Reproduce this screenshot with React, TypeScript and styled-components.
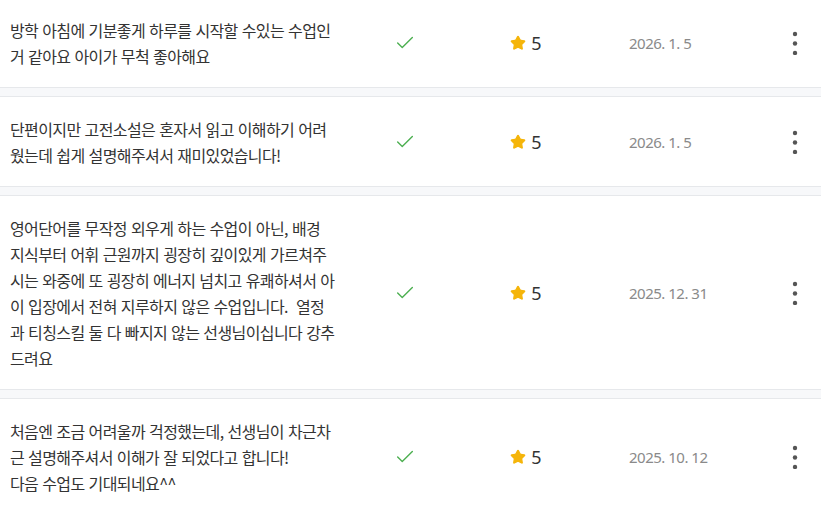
import React from "react"
import styled, { createGlobalStyle } from "styled-components"
import { Check, Star } from "lucide-react"

const GlobalStyle = createGlobalStyle`
  html, body {
    margin: 0;
    padding: 0;
    background: #f7f8fa;
  }
  body {
    font-family: "Noto Sans CJK KR", "Noto Sans", sans-serif;
  }
`

interface Review {
  id: number
  lines: string[]
  answered: boolean
  rating: number
  date: string
}

// lines kept as they wrap in the list view
const reviews: Review[] = [
  {
    id: 1,
    lines: ["방학 아침에 기분좋게 하루를 시작할 수있는 수업인", "거 같아요 아이가 무척 좋아해요"],
    answered: true,
    rating: 5,
    date: "2026. 1. 5",
  },
  {
    id: 2,
    lines: ["단편이지만 고전소설은 혼자서 읽고 이해하기 어려", "웠는데 쉽게 설명해주셔서 재미있었습니다!"],
    answered: true,
    rating: 5,
    date: "2026. 1. 5",
  },
  {
    id: 3,
    lines: [
      "영어단어를 무작정 외우게 하는 수업이 아닌, 배경",
      "지식부터 어휘 근원까지 굉장히 깊이있게 가르쳐주",
      "시는 와중에 또 굉장히 에너지 넘치고 유쾌하셔서 아",
      "이 입장에서 전혀 지루하지 않은 수업입니다.  열정",
      "과 티칭스킬 둘 다 빠지지 않는 선생님이십니다 강추",
      "드려요",
    ],
    answered: true,
    rating: 5,
    date: "2025. 12. 31",
  },
  {
    id: 4,
    lines: [
      "처음엔 조금 어려울까 걱정했는데, 선생님이 차근차",
      "근 설명해주셔서 이해가 잘 되었다고 합니다!",
      "다음 수업도 기대되네요^^",
    ],
    answered: true,
    rating: 5,
    date: "2025. 10. 12",
  },
]

const List = styled.div`
  display: flex;
  flex-direction: column;
  gap: 8px;
`

const Row = styled.div`
  display: grid;
  grid-template-columns: 340px 110px 132px 1fr 40px;
  align-items: center;
  padding: 18.5px 6px 18.5px 10px;
  background: #fff;
  border-top: 1px solid #e6e8eb;
  border-bottom: 1px solid #e6e8eb;

  &:first-child {
    border-top: none;
    padding-top: 16.5px;
  }
`

const ReviewText = styled.p`
  margin: 0;
  font-size: 16px;
  line-height: 26px;
  letter-spacing: -0.6px;
  word-spacing: 1px;
  color: #333;
  white-space: pre-wrap;
`

const StatusCell = styled.div`
  display: flex;
  justify-content: center;
  color: #4caf50;
`

const RatingCell = styled.div`
  display: flex;
  align-items: center;
  justify-content: center;
  gap: 5px;
  font-family: "Noto Sans", sans-serif;
  font-size: 18px;
  color: #333;
`

const DateCell = styled.div`
  padding-left: 37px;
  font-family: "Noto Sans", sans-serif;
  font-size: 15px;
  letter-spacing: -0.5px;
  color: #8a8a8a;
`

const MenuButton = styled.button`
  display: flex;
  justify-content: center;
  align-items: center;
  background: none;
  border: none;
  padding: 0;
  color: #555;
  cursor: pointer;
`

function MoreIcon() {
  return (
    <svg width="6" height="24" viewBox="0 0 6 24" fill="currentColor">
      <circle cx="3" cy="3" r="2.2" />
      <circle cx="3" cy="12.5" r="2.2" />
      <circle cx="3" cy="22" r="2.2" />
    </svg>
  )
}

export default function App() {
  return (
    <>
      <GlobalStyle />
      <List>
        {reviews.map((review) => (
          <Row key={review.id}>
            <ReviewText>{review.lines.join("\n")}</ReviewText>
            <StatusCell>
              {review.answered && <Check size={22} strokeWidth={1.5} />}
            </StatusCell>
            <RatingCell>
              <Star size={16} color="#f5b50a" fill="#f5b50a" strokeWidth={2} />
              <span>{review.rating}</span>
            </RatingCell>
            <DateCell>{review.date}</DateCell>
            <MenuButton aria-label="more">
              <MoreIcon />
            </MenuButton>
          </Row>
        ))}
      </List>
    </>
  )
}
